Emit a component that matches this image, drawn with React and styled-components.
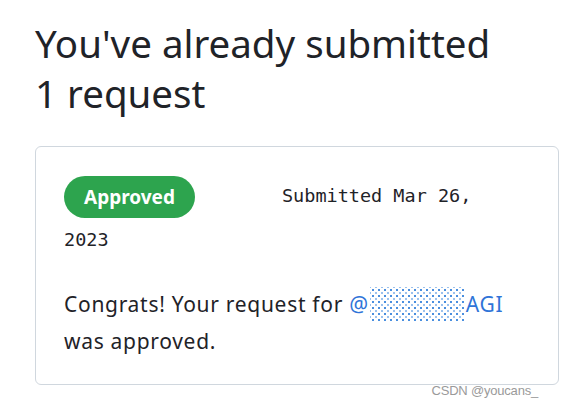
import React from "react";
import styled, { createGlobalStyle } from "styled-components";

const GlobalStyle = createGlobalStyle`
  html, body {
    margin: 0;
    padding: 0;
    background: #ffffff;
  }
  body {
    font-family: "Noto Sans", "Open Sans", Arial, sans-serif;
    color: #1f2328;
  }
`;

const Page = styled.div`
  position: relative;
  width: 586px;
  height: 407px;
  padding: 18px 0 0 35px;
  box-sizing: border-box;
  overflow: hidden;
`;

const Title = styled.h1`
  margin: 0 0 28px;
  max-width: 480px;
  font-size: 38.5px;
  font-weight: 400;
  line-height: 50px;
  color: #1f2328;
`;

const Card = styled.section`
  width: 524px;
  box-sizing: border-box;
  border: 1px solid #d0d7de;
  border-radius: 6px;
  background: #ffffff;
  padding: 27px 36px 24px 28px;
`;

const Meta = styled.p`
  margin: 0;
  line-height: 42.5px;
`;

const Badge = styled.span`
  display: inline-block;
  vertical-align: middle;
  height: 42px;
  line-height: 42px;
  padding: 0 20px;
  border-radius: 21px;
  background: #2da44e;
  color: #ffffff;
  font-size: 19px;
  font-weight: 700;
`;

const Submitted = styled.span`
  margin-left: 87px;
  vertical-align: middle;
  font-family: "DejaVu Sans Mono", "Liberation Mono", monospace;
  font-size: 18.5px;
  color: #1f2328;
`;

const Message = styled.p`
  margin: 24px 0 0;
  font-size: 21px;
  letter-spacing: 0.7px;
  line-height: 37px;
`;

const Mention = styled.a`
  color: #2f74d8;
  text-decoration: none;
`;

const Redacted = styled.span`
  display: inline-block;
  width: 94px;
  height: 34px;
  margin: 0 2px 0 1px;
  vertical-align: -9px;
  background-color: #ffffff;
  background-image:
    radial-gradient(circle, #4a8fdf 1px, transparent 1.4px),
    radial-gradient(circle, #9cc2ee 1px, transparent 1.4px);
  background-size: 6px 6px, 6px 6px;
  background-position: 0 0, 3px 3px;
`;

const Watermark = styled.span`
  position: absolute;
  right: 48px;
  bottom: 9px;
  font-family: "Liberation Sans", Arial, sans-serif;
  font-size: 13px;
  letter-spacing: -0.2px;
  color: #9a9a9a;
`;

export default function App() {
  return (
    <>
      <GlobalStyle />
      <Page>
        <Title>You've already submitted 1 request</Title>
        <Card>
          <Meta>
            <Badge>Approved</Badge>
            <Submitted>Submitted Mar 26, 2023</Submitted>
          </Meta>
          <Message>
            Congrats! Your request for{" "}
            <Mention href="#">
              @<Redacted aria-hidden="true" />AGI
            </Mention>{" "}
            was approved.
          </Message>
        </Card>
        <Watermark>CSDN @youcans_</Watermark>
      </Page>
    </>
  );
}
